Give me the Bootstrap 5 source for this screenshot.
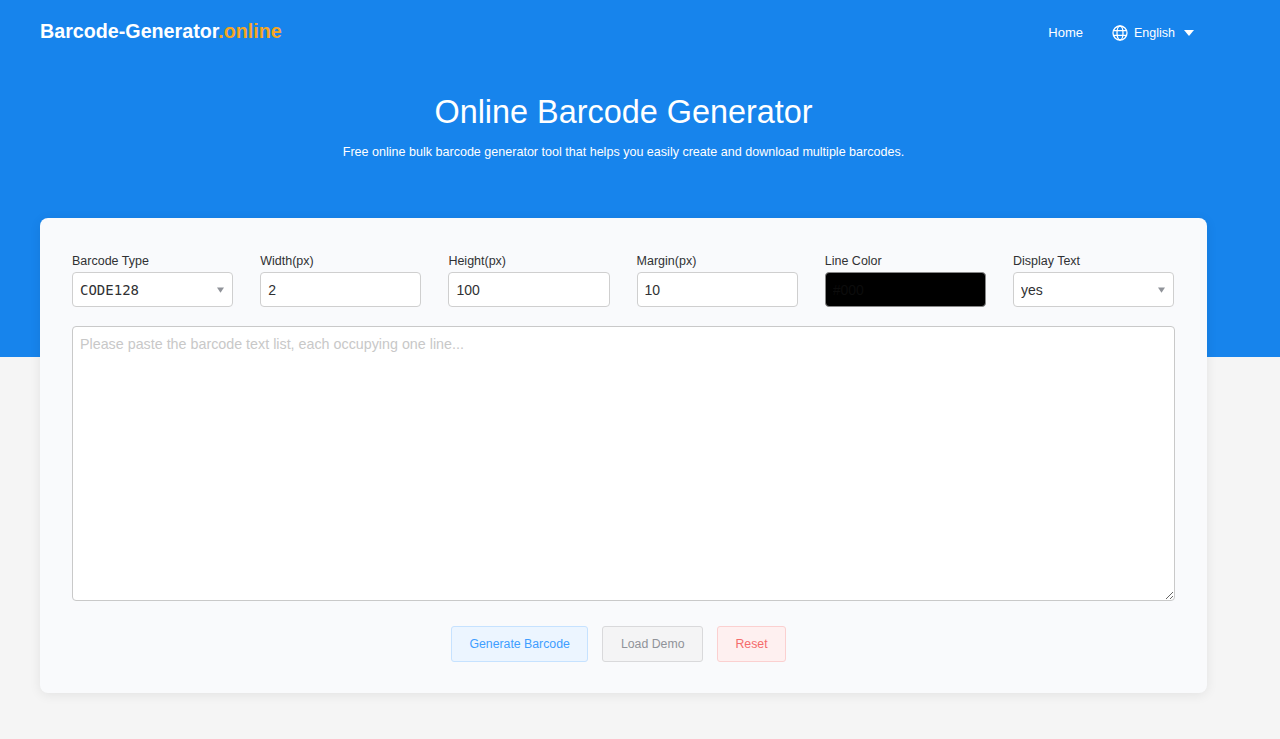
<!DOCTYPE html>
<html lang="en">
<head>
<meta charset="utf-8">
<title>Online Barcode Generator</title>
<link href="https://cdn.jsdelivr.net/npm/bootstrap@5.3.0/dist/css/bootstrap.min.css" rel="stylesheet">
<style>
html,body{height:100%;overflow:hidden}
body{font-family:"Liberation Sans",Arial,sans-serif;background:#f5f5f5;color:#303133}
.page-wrap{min-height:739px;background:linear-gradient(#1784ec 357px,#f5f5f5 357px);padding:0 73px 0 40px}
.top-bar{height:62px;color:#fff}
.brand-txt{font-size:19.7px;font-weight:700;color:#fff;text-decoration:none;line-height:24px}
.brand-txt span{color:#f5a623}
.nav-group{margin-top:3px}
.nav-txt{font-size:13px;color:#fff;text-decoration:none;line-height:16px}
.lang-txt{margin-left:29px;margin-right:13px;font-size:12.5px}
.globe-ico{margin-right:6px}
.caret-shape{display:inline-block;width:0;height:0;border-left:5.5px solid transparent;border-right:5.5px solid transparent;border-top:6px solid #fff;margin-left:9px}
.hero-box{height:156px;padding-top:30px;width:1167px}
.hero-title{font-size:32.4px;font-weight:400;line-height:40px;margin:0 0 11px;color:#fff}
.hero-sub{font-size:12.55px;line-height:18px;margin:0;color:#fff}
.main-panel{width:1167px;height:475px;background:#f9fafc;border:0;border-radius:8px;padding:32px;box-shadow:0 2px 12px rgba(0,0,0,.08)}
.field-grid{display:grid;grid-template-columns:repeat(6,161.2px);column-gap:27px;margin-bottom:19px}
.field-lbl{display:block;font-size:12.5px;line-height:16px;margin:3px 0 3px;color:#303133}
.field-ctl.form-control,.field-ctl.form-select{height:35px;font-size:14px;line-height:20px;padding:6px 7px;border:1px solid #cfcfcf;border-radius:4px;color:#303133;background-color:#fff;box-shadow:none}
.field-ctl.form-select{padding-right:24px;background-image:url("data:image/svg+xml,%3csvg xmlns='http://www.w3.org/2000/svg' viewBox='0 0 8 6'%3e%3cpath fill='%23909399' d='M0 0h8L4 6z'/%3e%3c/svg%3e");background-size:7px 6px;background-position:right 8px center}
.code-val{font-family:"DejaVu Sans Mono","Liberation Mono",monospace}
.field-ctl.swatch-ctl{background:#000;border-color:#888;color:#0c0c0c}
.text-area-box.form-control{display:block;width:1102.5px;height:275px;font-size:14.3px;line-height:20px;padding:7px;border:1px solid #c9c9c9;border-radius:4px;box-shadow:none;margin-bottom:25px}
.text-area-box::placeholder{color:#c8c8c8;opacity:1}
.act-row{gap:14px;padding-right:10px}
.act-btn.btn{height:36px;font-size:12.3px;line-height:16px;padding:0 17px;border-radius:3px}
.act-blue.btn{color:#409eff;background:#ecf5ff;border:1px solid #c6e2ff}
.act-gray.btn{color:#909399;background:#f4f4f5;border:1px solid #d9d9db;padding:0 18px}
.act-red.btn{color:#f56c6c;background:#fef0f0;border:1px solid #fbd0d0}
</style>
</head>
<body>
<div class="page-wrap">
  <header class="top-bar d-flex align-items-center justify-content-between">
    <a class="brand-txt" href="#">Barcode-Generator<span>.online</span></a>
    <nav class="nav-group d-flex align-items-center">
      <a class="nav-txt" href="#">Home</a>
      <a class="nav-txt lang-txt d-flex align-items-center" href="#">
        <svg class="globe-ico" width="16" height="16" viewBox="0 0 16 16" fill="none" stroke="#fff" stroke-width="1.3"><circle cx="8" cy="8" r="7"/><ellipse cx="8" cy="8" rx="3" ry="7"/><path d="M1.2 5.6h13.6M1.2 10.4h13.6"/></svg>English<span class="caret-shape"></span>
      </a>
    </nav>
  </header>
  <section class="hero-box text-center">
    <h1 class="hero-title">Online Barcode Generator</h1>
    <p class="hero-sub">Free online bulk barcode generator tool that helps you easily create and download multiple barcodes.</p>
  </section>
  <main class="main-panel">
    <form>
      <div class="field-grid">
        <div><label class="field-lbl">Barcode Type</label>
          <select class="form-select field-ctl code-val"><option>CODE128</option></select></div>
        <div><label class="field-lbl">Width(px)</label>
          <input class="form-control field-ctl" value="2"></div>
        <div><label class="field-lbl">Height(px)</label>
          <input class="form-control field-ctl" value="100"></div>
        <div><label class="field-lbl">Margin(px)</label>
          <input class="form-control field-ctl" value="10"></div>
        <div><label class="field-lbl">Line Color</label>
          <input class="form-control field-ctl swatch-ctl" value="#000"></div>
        <div><label class="field-lbl">Display Text</label>
          <select class="form-select field-ctl"><option>yes</option></select></div>
      </div>
      <textarea class="form-control text-area-box" placeholder="Please paste the barcode text list, each occupying one line..."></textarea>
      <div class="d-flex justify-content-center act-row">
        <button type="button" class="btn act-btn act-blue">Generate Barcode</button>
        <button type="button" class="btn act-btn act-gray">Load Demo</button>
        <button type="button" class="btn act-btn act-red">Reset</button>
      </div>
    </form>
  </main>
</div>
</body>
</html>
